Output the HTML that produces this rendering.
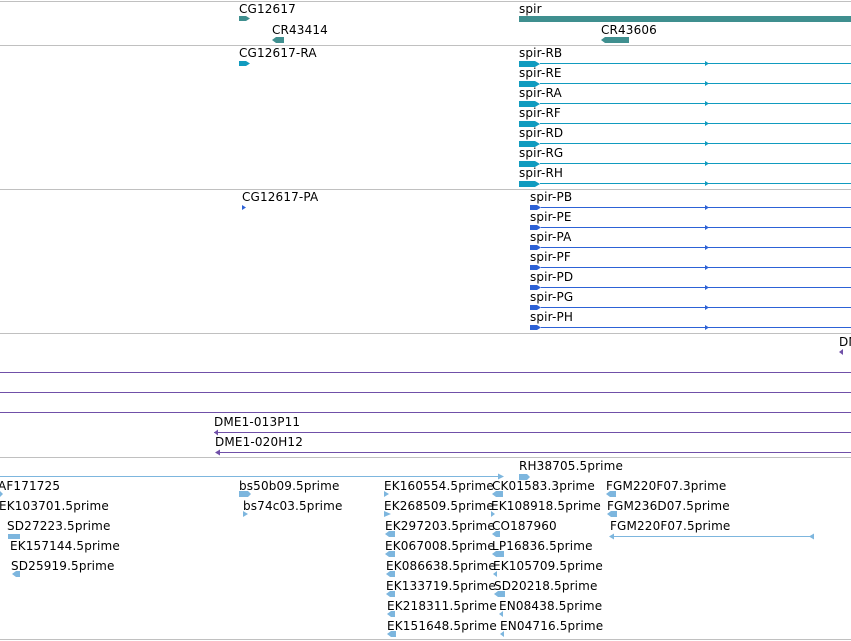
<!DOCTYPE html>
<html><head><meta charset="utf-8"><style>
html,body{margin:0;padding:0;background:#fff;width:851px;height:641px;overflow:hidden}
svg text{font-family:"DejaVu Sans","Liberation Sans",sans-serif;font-size:12px;fill:#000;letter-spacing:0.15px}
</style></head><body>
<svg width="851" height="641" xmlns="http://www.w3.org/2000/svg">
<g stroke="#c0c0c0" stroke-width="1">
<line x1="0" y1="1.5" x2="851" y2="1.5"/><line x1="0" y1="45.5" x2="851" y2="45.5"/>
<line x1="0" y1="189.5" x2="851" y2="189.5"/><line x1="0" y1="333.5" x2="851" y2="333.5"/>
<line x1="0" y1="457.5" x2="851" y2="457.5"/><line x1="0" y1="639.5" x2="851" y2="639.5"/>
</g>
<text x="239" y="13">CG12617</text>
<polygon fill="#3f8f8f" points="239,16 246,16 250,18.5 246,21 239,21"/>
<text x="519" y="13">spir</text>
<rect fill="#3f8f8f" x="519" y="16" width="332" height="6"/>
<text x="272" y="34">CR43414</text>
<polygon fill="#3f8f8f" points="276,37 284,37 284,43 276,43 272,40"/>
<text x="601" y="34">CR43606</text>
<polygon fill="#3f8f8f" points="605,37 629,37 629,43 605,43 601,40"/>
<text x="239" y="57">CG12617-RA</text>
<text x="519" y="57">spir-RB</text><text x="519" y="77">spir-RE</text><text x="519" y="97">spir-RA</text>
<text x="519" y="117">spir-RF</text><text x="519" y="137">spir-RD</text><text x="519" y="157">spir-RG</text><text x="519" y="177">spir-RH</text>
<g fill="#119bbf" stroke="#119bbf">
<polygon stroke="none" points="239,61 246,61 250,63.5 246,66 239,66"/>
<g id="tr"><polygon stroke="none" points="519,61 535,61 540,64 535,67 519,67"/><line x1="540" y1="63.5" x2="851" y2="63.5"/><polygon stroke="none" points="705,61 709,63.5 705,66"/></g>
<use href="#tr" y="20"/><use href="#tr" y="40"/><use href="#tr" y="60"/><use href="#tr" y="80"/><use href="#tr" y="100"/><use href="#tr" y="120"/>
</g>
<text x="242" y="201">CG12617-PA</text>
<polygon fill="#2d62d6" points="242,205 246,207.5 242,210"/>
<text x="530" y="201">spir-PB</text><text x="530" y="221">spir-PE</text><text x="530" y="241">spir-PA</text>
<text x="530" y="261">spir-PF</text><text x="530" y="281">spir-PD</text><text x="530" y="301">spir-PG</text><text x="530" y="321">spir-PH</text>
<g fill="#2d62d6" stroke="#2d62d6">
<g id="pr"><polygon stroke="none" points="530,205 537,205 541,207.5 537,210 530,210"/><line x1="541" y1="207.5" x2="851" y2="207.5"/><polygon stroke="none" points="705,205 709,207.5 705,210"/></g>
<use href="#pr" y="20"/><use href="#pr" y="40"/><use href="#pr" y="60"/><use href="#pr" y="80"/><use href="#pr" y="100"/><use href="#pr" y="120"/>
</g>
<text x="839" y="346">DM</text>
<polygon fill="#7050a8" points="843,349 843,355 839,352"/>
<g stroke="#7050a8" stroke-width="1">
<line x1="0" y1="372.5" x2="851" y2="372.5"/><line x1="0" y1="392.5" x2="851" y2="392.5"/><line x1="0" y1="412.5" x2="851" y2="412.5"/>
<line x1="214" y1="432.5" x2="851" y2="432.5"/><line x1="216" y1="452.5" x2="851" y2="452.5"/>
</g>
<polygon fill="#7050a8" points="218,429.5 218,435.5 214,432.5"/>
<polygon fill="#7050a8" points="220,449.5 220,455.5 215,452.5"/>
<text x="214" y="426">DME1-013P11</text>
<text x="215" y="446">DME1-020H12</text>
<g stroke="#7db6de"><line x1="0" y1="476.5" x2="500" y2="476.5"/><line x1="612" y1="536.5" x2="814" y2="536.5"/></g>
<g fill="#7db6de">
<polygon points="498,473.5 504,476.5 498,479.5"/>
<polygon points="519,474 527,474 530,477 527,480 519,480"/>
<polygon points="0,491 3,494 0,497"/>
<polygon points="8,534 20,534 20,539 8,539"/>
<polygon points="16,571 20,571 20,577 16,577 12,574"/>
<polygon points="239,491 248,491 251,494 248,497 239,497"/>
<polygon points="243,511 248,514 243,517"/>
<polygon points="384,491 389,494 384,497"/>
<polygon points="384,511 391,514 384,517"/>
<polygon points="389,531 395,531 395,537 389,537 385,534"/>
<polygon points="389,551 395,551 395,557 389,557 385,554"/>
<polygon points="390,571 395,571 395,577 390,577 386,574"/>
<polygon points="390,591 395,591 395,597 390,597 386,594"/>
<polygon points="391,611 395,611 395,617 391,617 387,614"/>
<polygon points="391,631 396,631 396,637 391,637 387,634"/>
<polygon points="496,491 503,491 503,497 496,497 492,494"/>
<polygon points="491,511 495,514 491,517"/>
<polygon points="496,531 500,531 500,537 496,537 492,534"/>
<polygon points="496,551 504,551 504,557 496,557 492,554"/>
<polygon points="497,571 497,577 493,574"/>
<polygon points="498,591 505,591 505,597 498,597 494,594"/>
<polygon points="503,611 503,617 499,614"/>
<polygon points="504,631 504,637 500,634"/>
<polygon points="610,491 616,491 616,497 610,497 606,494"/>
<polygon points="611,511 617,511 617,517 611,517 607,514"/>
<polygon points="614,533.5 614,539.5 609,536.5"/>
<polygon points="814,533.5 814,539.5 809,536.5"/>
</g>
<text x="519" y="470">RH38705.5prime</text>
<text x="-2" y="490">AF171725</text>
<text x="-1" y="510">EK103701.5prime</text>
<text x="7" y="530">SD27223.5prime</text>
<text x="10" y="550">EK157144.5prime</text>
<text x="11" y="570">SD25919.5prime</text>
<text x="239" y="490">bs50b09.5prime</text>
<text x="243" y="510">bs74c03.5prime</text>
<text x="384" y="490">EK160554.5prime</text>
<text x="384" y="510">EK268509.5prime</text>
<text x="385" y="530">EK297203.5prime</text>
<text x="385" y="550">EK067008.5prime</text>
<text x="386" y="570">EK086638.5prime</text>
<text x="386" y="590">EK133719.5prime</text>
<text x="387" y="610">EK218311.5prime</text>
<text x="387" y="630">EK151648.5prime</text>
<text x="492" y="490">CK01583.3prime</text>
<text x="491" y="510">EK108918.5prime</text>
<text x="492" y="530">CO187960</text>
<text x="492" y="550">LP16836.5prime</text>
<text x="493" y="570">EK105709.5prime</text>
<text x="494" y="590">SD20218.5prime</text>
<text x="499" y="610">EN08438.5prime</text>
<text x="500" y="630">EN04716.5prime</text>
<text x="606" y="490">FGM220F07.3prime</text>
<text x="607" y="510">FGM236D07.5prime</text>
<text x="610" y="530">FGM220F07.5prime</text>
</svg>
</body></html>
